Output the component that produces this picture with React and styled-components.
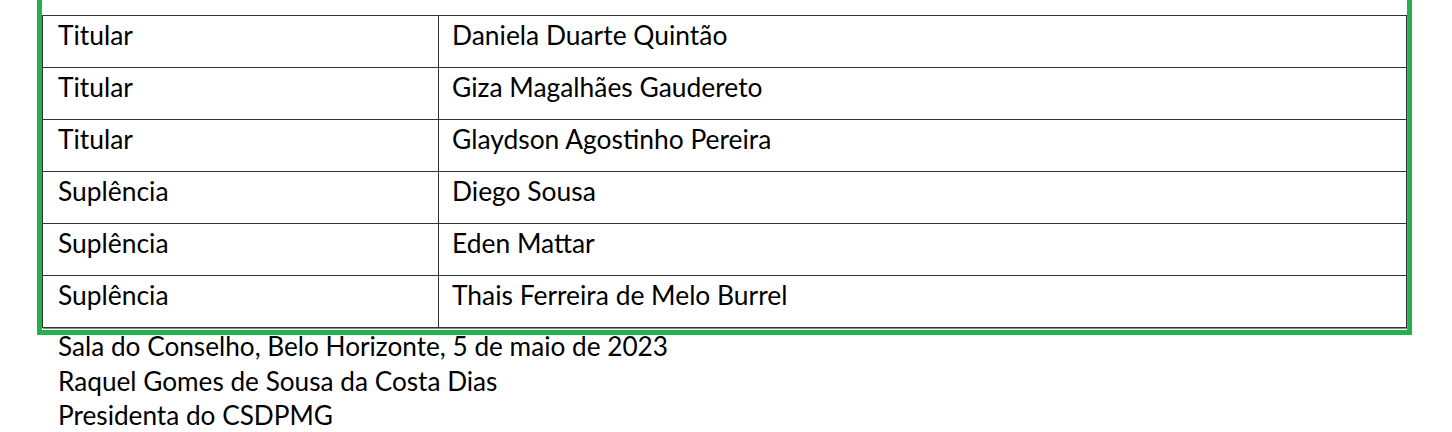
import React from "react";
import styled, { createGlobalStyle } from "styled-components";

const Global = createGlobalStyle`
  html, body { margin: 0; padding: 0; background: #fff; }
  body { font-family: Lato, "Liberation Sans", sans-serif; color: #000; }
`;

const Page = styled.div`
  padding-left: 37px;
  width: 1375px;
`;

const Frame = styled.div`
  border: 5px solid #22b14c;
  border-top: none;
  padding: 15px 0 2px 0;
`;

const Table = styled.table`
  width: 100%;
  table-layout: fixed;
  border-collapse: collapse;
  border: 1px solid #000;
  box-shadow: 1px 1px 0 #8a8a8a;
  font-size: 26.4px;
`;

const Col = styled.col`
  width: ${(p) => p.$w || "auto"};
`;

const Row = styled.tr`
  height: 52px;
`;

const Cell = styled.td`
  border: 1px solid #333;
  padding: 5px 14px 0 ${(p) => (p.$first ? "15px" : "13px")};
  vertical-align: top;
  line-height: 28px;
  white-space: nowrap;
`;

const Signature = styled.div`
  margin-top: -6px;
  padding-left: 21px;
  font-size: 26.2px;
  line-height: 34.5px;
`;

const Line = styled.div``;

const rows = [
  ["Titular", "Daniela Duarte Quintão"],
  ["Titular", "Giza Magalhães Gaudereto"],
  ["Titular", "Glaydson Agostinho Pereira"],
  ["Suplência", "Diego Sousa"],
  ["Suplência", "Eden Mattar"],
  ["Suplência", "Thais Ferreira de Melo Burrel"],
];

export default function App() {
  return (
    <>
      <Global />
      <Page>
        <Frame>
          <Table>
            <colgroup>
              <Col $w="396px" />
              <Col />
            </colgroup>
            <tbody>
              {rows.map(([a, b], i) => (
                <Row key={i}>
                  <Cell $first>{a}</Cell>
                  <Cell>{b}</Cell>
                </Row>
              ))}
            </tbody>
          </Table>
        </Frame>
        <Signature>
          <Line>Sala do Conselho, Belo Horizonte, 5 de maio de 2023</Line>
          <Line>Raquel Gomes de Sousa da Costa Dias</Line>
          <Line>Presidenta do CSDPMG</Line>
        </Signature>
      </Page>
    </>
  );
}
